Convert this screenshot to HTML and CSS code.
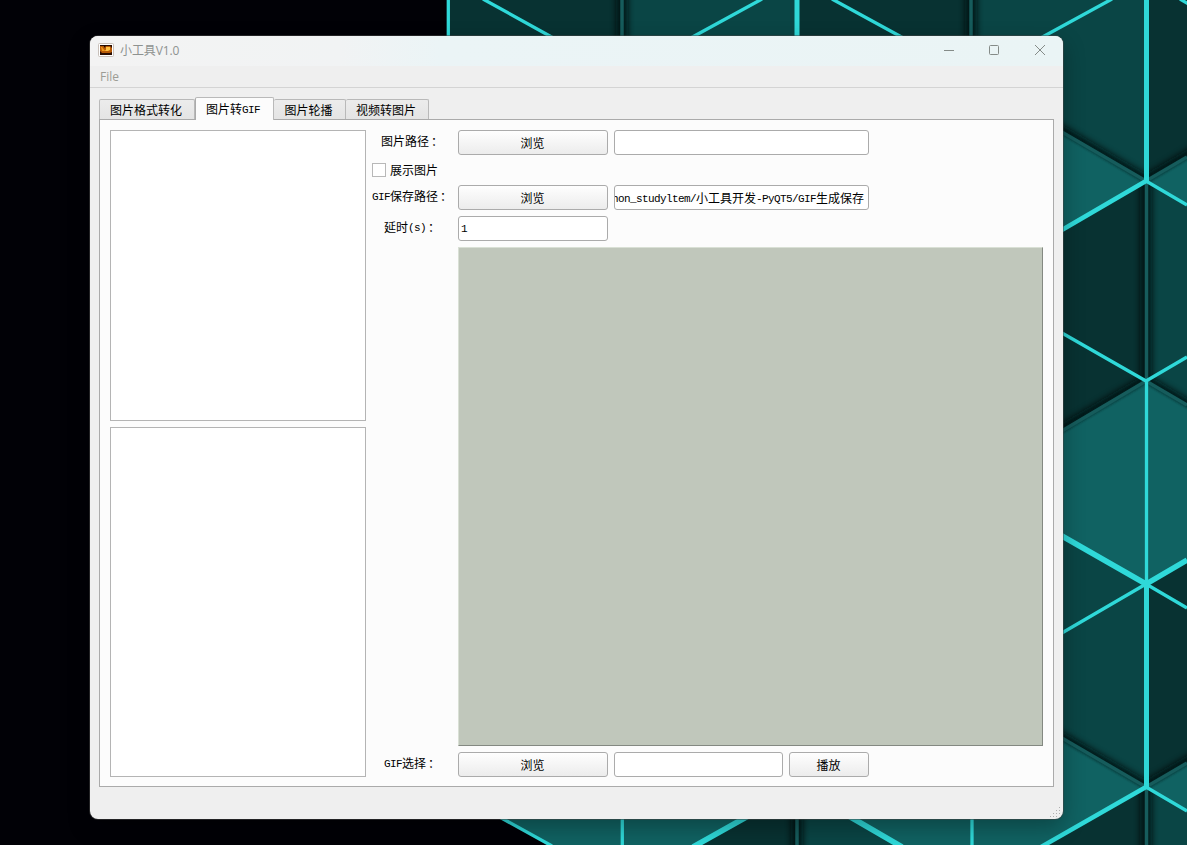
FILE: index.html
```
<!DOCTYPE html>
<html lang="zh-CN">
<head>
    <meta charset="UTF-8">
    <title>小工具V1.0</title>
    <link rel="stylesheet" href="styles.css">
</head>
<body>
    <svg class="wallpaper" width="1187" height="845" viewBox="0 0 1187 845">
        <defs>
            <filter id="soft" x="-50" y="-50" width="1300" height="950" filterUnits="userSpaceOnUse">
                <feGaussianBlur stdDeviation="3"/>
            </filter>
            <filter id="thin" x="-50" y="-50" width="1300" height="950" filterUnits="userSpaceOnUse">
                <feGaussianBlur stdDeviation="1"/>
            </filter>
        </defs>
        <rect width="1187" height="845" fill="#010106"/>
        <!-- faces -->
        <g fill="#083232">
            <path d="M448 0H622V40H448zM797 0H971V40H797zM1146 0H1187V157L1146 181z"/>
            <path d="M1146 181V381L1055 435V234zM1146 584L1187 560V763L1146 787zM1146 787V845H1043zM745 815H797V845H695z"/>
        </g>
        <g fill="#0a4545">
            <path d="M622 0H797V40H622zM971 0H1146V181L1055 128V40H971z"/>
            <path d="M1146 181L1187 205V405L1146 381zM1146 584V787L1055 734V531zM1146 787L1187 811V845H1146zM797 815H848L898 845H797z"/>
        </g>
        <!-- shadow of the recessed edges, only falls on the darker faces -->
        <g fill="none" stroke="#001010" stroke-width="12" filter="url(#soft)" opacity=".8">
            <path d="M622 -20V40M971 -20V40M1037 117L1146 181L1207 145M1146 181V381M1037 445L1146 381L1207 417M1037 724L1146 787L1207 751M1146 787V865M797 815V865"/>
        </g>
        <g fill="#106262">
            <path d="M1146 181L1055 234V128zM1146 181L1187 157V205zM1146 381L1187 405V560L1146 584L1055 531V435z"/>
            <path d="M1146 787L1043 845H898L848 815H1055V734zM1146 787L1187 763V811zM496 815H750L695 845H552z"/>
        </g>
        <g fill="none" stroke="#002222" stroke-width="5" filter="url(#thin)" opacity=".6">
            <path d="M1037 117L1146 181L1207 145M1037 445L1146 381L1207 417M1037 724L1146 787L1207 751"/>
        </g>
        <g fill="none" stroke="#165c5c" stroke-width="3.5">
            <path d="M622 0V40M971 0V40M1055 128L1146 181L1187 157M1146.5 181V381M1055 435L1146 381L1187 405M1055 734L1146 787L1187 763M1146.5 787V845M797 815V845"/>
        </g>
        <!-- lit edges -->
        <g fill="none" stroke="#2fd9d9">
            <path stroke-width="3.3" d="M448.3 0V40M483 -1L557 40M762 -1L687 40M832 -1L907 40M1112 -1L1037 40M1180 -1L1190 5"/>
            <path stroke-width="3.3" d="M1055 329L1146 381L1187 357M1146.5 381V584M1055 637L1146 584L1187 608M1146 787L1187 811M1146 181L1187 205M622.3 815V845M972 815V845M496 815L552 846"/>
            <path stroke-width="4.5" d="M1146 181L1055 234M1146 787L1041 847"/>
            <path stroke-width="5" d="M797 0V40M1146.5 0V181M1146.5 584V787"/>
            <path stroke-width="5.5" d="M1055 532L1146 584L1187 560M750 815L693 847M847 815L902 847"/>
        </g>
    </svg>

    <div class="window">
        <div class="titlebar">
            <svg class="app-icon" width="16" height="14" viewBox="0 0 16 14">
                <rect x=".5" y=".5" width="15" height="13" rx="1" fill="#fff" stroke="#c8c0ba"/>
                <rect x="2" y="2" width="12" height="10" fill="#2a0d02"/>
                <path d="M2 3h10l2 2v4l-2 1H4L2 8z" fill="#b85a06"/>
                <path d="M8 4h4v3l-2 1H6l2-1z" fill="#ffc040"/>
                <path d="M3 4h1l3 4H4z" fill="#f09a1c"/>
                <path d="M5 2h3L7 5z" fill="#1c0800"/>
            </svg>
            <span class="title">小工具V1.0</span>
            <svg class="controls" width="104" height="14" viewBox="0 0 104 14" fill="none" stroke="#858b88">
                <path d="M1 7.500H11"/>
                <rect x="46.500" y="2.500" width="9" height="9" rx="1"/>
                <path d="M92 2L102 12M102 2L92 12"/>
            </svg>
        </div>
        <div class="menubar">File</div>

        <div class="tabs">
            <div class="tab first">图片格式转化</div>
            <div class="tab active">图片转<span class="en">GIF</span></div>
            <div class="tab third">图片轮播</div>
            <div class="tab last">视频转图片</div>
        </div>

        <div class="page">
            <div class="lists">
                <div class="list top"></div>
                <div class="list"></div>
            </div>
            <div class="form">
                <div class="label">图片路径<span class="colon">：</span></div>
                <button class="btn">浏览</button>
                <div class="input wide"></div>

                <div class="check row"><span class="box"></span>展示图片</div>

                <div class="label"><span class="en">GIF</span>保存路径<span class="colon">：</span></div>
                <button class="btn">浏览</button>
                <div class="input wide path"><span><span class="en">hon_studyltem/</span>小工具开发<span class="en">-PyQT5/GIF</span>生成保存</span></div>

                <div class="label">延时<span class="en">(s)</span><span class="colon">：</span></div>
                <div class="input delay"><span class="en">1</span></div>

                <div class="actions">
                    <div class="check">
                        <span class="box"><svg width="12" height="12" viewBox="0 0 12 12"><path d="M2.500 5.500L5 9L9.500 2" fill="none" stroke="#000" stroke-width="2"/></svg></span>自动命名
                    </div>
                    <button class="btn">生成<span class="en">GIF</span></button>
                </div>
                <div class="preview"></div>

                <div class="label"><span class="en">GIF</span>选择<span class="colon">：</span></div>
                <button class="btn">浏览</button>
                <div class="input"></div>
                <button class="btn">播放</button>
            </div>
        </div>
        <svg class="grip" width="12" height="12" viewBox="0 0 12 12" fill="#b0b0b0">
            <path d="M9 0h1v1h-1zM6 3h1v1h-1zM9 3h1v1h-1zM3 6h1v1h-1zM6 6h1v1h-1zM9 6h1v1h-1zM0 9h1v1h-1zM3 9h1v1h-1zM6 9h1v1h-1z"/>
        </svg>
    </div>
</body>
</html>
```
FILE: styles.css
```
* {
    box-sizing: border-box;
}

body {
    margin: 0;
    padding: 36px 0 0 90px;
    height: 845px;
    overflow: hidden;
    background: #010106;
    font-family: "Noto Sans CJK SC", sans-serif;
    font-size: 12px;
    line-height: 16px;
    color: #000;
}

.wallpaper {
    position: absolute;
    left: 0;
    top: 0;
}

.window {
    position: relative;
    width: 973px;
    height: 783px;
    border-radius: 8px;
    overflow: hidden;
    background: #efefef;
    box-shadow: 0 0 0 1px rgba(70, 70, 70, 0.5), 0 8px 22px rgba(0, 0, 0, 0.3);
}

.titlebar {
    display: flex;
    align-items: center;
    height: 30px;
    padding: 0 16px 2px 8px;
    background: linear-gradient(90deg, #f3f3f3 0, #f1f3f4 250px, #ebf4f6 350px, #eaf4f5 100%);
    color: #8e9290;
}

.title {
    margin-left: 6px;
    padding-top: 2px;
    font-family: "Open Sans", "Noto Sans CJK SC", sans-serif;
    letter-spacing: -0.1px;
}

.controls {
    margin-left: auto;
}

.menubar {
    height: 22px;
    padding: 3px 10px 0;
    border-bottom: 1px solid #d4d4d4;
    font-family: "Open Sans", sans-serif;
    color: #9c9c94;
}

/* half-width latin, 6px per letter */
.en {
    font-family: "Liberation Mono", monospace;
    font-size: 11px;
    line-height: 1;
    letter-spacing: -0.6px;
    vertical-align: 1px;
}

.colon {
    margin: 0 -2px 0 2px;
}

.tabs {
    display: flex;
    align-items: flex-end;
    height: 31px;
    margin-left: 9px;
}

.tab {
    height: 20px;
    padding: 2px 2px 0 0;
    border: 1px solid #b9b9b9;
    border-left: none;
    border-bottom: none;
    border-radius: 2px 2px 0 0;
    background: linear-gradient(#ececec, #e4e4e4);
    text-align: center;
    white-space: nowrap;
}

.first {
    width: 96px;
    border-left: 1px solid #b9b9b9;
}

.active {
    position: relative;
    z-index: 1;
    width: 79px;
    height: 23px;
    padding: 3px 3px 0 0;
    margin-bottom: -1px;
    border-left: 1px solid #ababab;
    background: #fcfcfc;
}

.third {
    width: 72px;
}

.last {
    width: 83px;
}

.page {
    display: flex;
    gap: 6px;
    width: 955px;
    height: 668px;
    margin-left: 9px;
    padding: 10px;
    border: 1px solid #aaa;
    background: #fcfcfc;
}

.lists {
    display: flex;
    flex-direction: column;
    gap: 6px;
    width: 256px;
    height: 647px;
}

.list {
    flex: 1;
    border: 1px solid #b4b4b4;
    background: #fff;
}

.list.top {
    flex: 0 0 291px;
}

.form {
    display: grid;
    grid-template-columns: 80px 150px 169px 80px 168px;
    grid-template-rows: 25px 18px 25px 25px 499px 25px;
    gap: 6px;
}

.label {
    grid-column: 1;
    padding: 3px 2px 0 0;
    text-align: center;
    white-space: nowrap;
}

.btn {
    height: 25px;
    padding: 1px 1px 0 0;
    border: 1px solid #ababab;
    border-radius: 3px;
    background: linear-gradient(#fefefe, #ececec);
    font: inherit;
    color: #000;
}

.input {
    display: flex;
    align-items: center;
    height: 25px;
    padding: 1px 2px 0;
    border: 1px solid #ababab;
    border-radius: 3px;
    background: #fff;
    overflow: hidden;
    white-space: nowrap;
}

.wide {
    grid-column: 3 / 5;
}

/* long paths are scrolled to their end */
.path {
    justify-content: flex-end;
    padding-right: 4px;
    padding-left: 0;
}

.check {
    display: flex;
    align-items: center;
    height: 18px;
    gap: 4px;
    white-space: nowrap;
}

.row {
    grid-column: 1 / -1;
}

.box {
    display: flex;
    width: 14px;
    height: 14px;
    border: 1px solid #b8b8b8;
    background: #fff;
}

.actions {
    display: flex;
    flex-direction: column;
    gap: 6px;
    padding-top: 180px;
}

.preview {
    grid-column: 2 / -1;
    border: 1px solid #848982;
    border-top-color: #d9e0d5;
    border-left-color: #d9e0d5;
    background: #c0c7bb;
}

.grip {
    position: absolute;
    right: 1px;
    bottom: 0;
}
```
